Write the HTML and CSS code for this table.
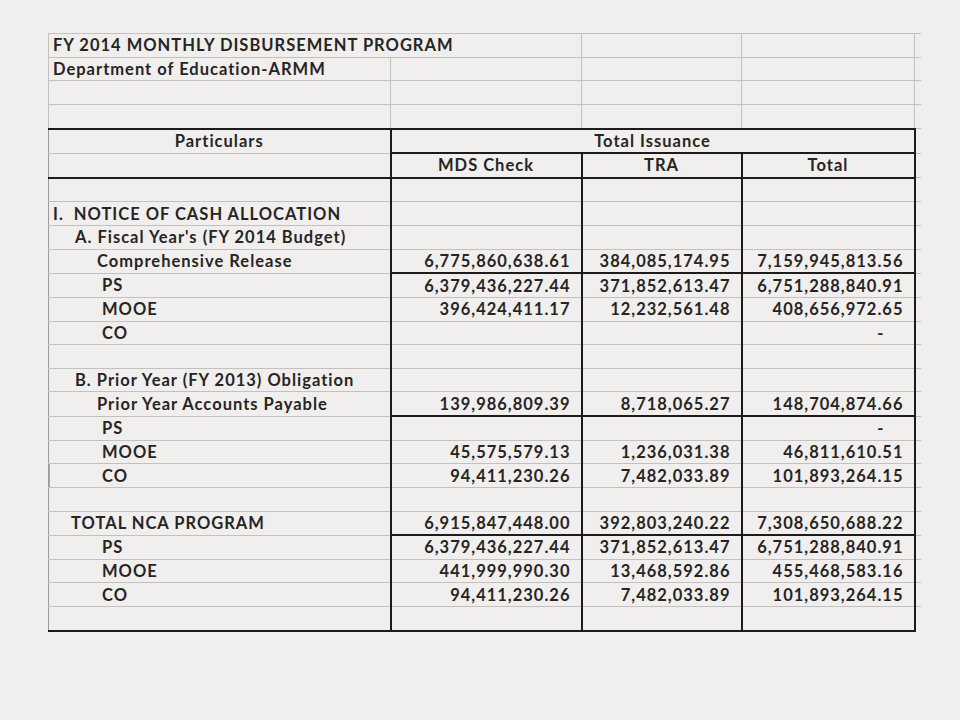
FILE: index.html
```html
<!DOCTYPE html>
<html>
<head>
<meta charset="utf-8">
<title>FY 2014 Monthly Disbursement Program</title>
<link rel="stylesheet" href="styles.css">
</head>
<body>
<div class="sheet">
<table class="grid">
  <colgroup>
    <col class="c-part"><col class="c-mds"><col class="c-tra"><col class="c-tot"><col class="c-pad">
  </colgroup>
  <tbody>
    <tr><td colspan="2" class="title">FY 2014 MONTHLY DISBURSEMENT PROGRAM</td><td></td><td></td><td class="pad"></td></tr>
    <tr><td class="title">Department of Education-ARMM</td><td></td><td></td><td></td><td class="pad"></td></tr>
    <tr><td></td><td></td><td></td><td></td><td class="pad"></td></tr>
    <tr><td></td><td></td><td></td><td></td><td class="pad"></td></tr>
    <tr class="head-top"><td class="center lb">Particulars</td><td colspan="3" class="center issuance">Total Issuance</td><td class="pad"></td></tr>
    <tr class="head-sub"><td class="lb"></td><td class="center vb">MDS Check</td><td class="center vb">TRA</td><td class="center vb rb">Total</td><td class="pad"></td></tr>
    <tr class="body-top"><td class="lb"></td><td class="vb"></td><td class="vb"></td><td class="vb rb"></td><td class="pad"></td></tr>
    <tr><td class="lb sec">I.&nbsp;&nbsp;NOTICE OF CASH ALLOCATION</td><td class="vb"></td><td class="vb"></td><td class="vb rb"></td><td class="pad"></td></tr>
    <tr><td class="lb l1">A. Fiscal Year's (FY 2014 Budget)</td><td class="vb"></td><td class="vb"></td><td class="vb rb"></td><td class="pad"></td></tr>
    <tr class="sub"><td class="lb l2">Comprehensive Release</td><td class="vb num">6,775,860,638.61</td><td class="vb num">384,085,174.95</td><td class="vb rb num">7,159,945,813.56</td><td class="pad"></td></tr>
    <tr><td class="lb l3">PS</td><td class="vb num">6,379,436,227.44</td><td class="vb num">371,852,613.47</td><td class="vb rb num">6,751,288,840.91</td><td class="pad"></td></tr>
    <tr><td class="lb l3">MOOE</td><td class="vb num">396,424,411.17</td><td class="vb num">12,232,561.48</td><td class="vb rb num">408,656,972.65</td><td class="pad"></td></tr>
    <tr><td class="lb l3">CO</td><td class="vb num"></td><td class="vb num"></td><td class="vb rb num dash">-</td><td class="pad"></td></tr>
    <tr><td class="lb"></td><td class="vb"></td><td class="vb"></td><td class="vb rb"></td><td class="pad"></td></tr>
    <tr><td class="lb l1">B. Prior Year (FY 2013) Obligation</td><td class="vb"></td><td class="vb"></td><td class="vb rb"></td><td class="pad"></td></tr>
    <tr class="sub"><td class="lb l2">Prior Year Accounts Payable</td><td class="vb num">139,986,809.39</td><td class="vb num">8,718,065.27</td><td class="vb rb num">148,704,874.66</td><td class="pad"></td></tr>
    <tr><td class="lb l3">PS</td><td class="vb num"></td><td class="vb num"></td><td class="vb rb num dash">-</td><td class="pad"></td></tr>
    <tr><td class="lb l3">MOOE</td><td class="vb num">45,575,579.13</td><td class="vb num">1,236,031.38</td><td class="vb rb num">46,811,610.51</td><td class="pad"></td></tr>
    <tr><td class="lb l3 mark">CO</td><td class="vb num">94,411,230.26</td><td class="vb num">7,482,033.89</td><td class="vb rb num">101,893,264.15</td><td class="pad"></td></tr>
    <tr><td class="lb"></td><td class="vb"></td><td class="vb"></td><td class="vb rb"></td><td class="pad"></td></tr>
    <tr class="sub"><td class="lb tot">TOTAL NCA PROGRAM</td><td class="vb num">6,915,847,448.00</td><td class="vb num">392,803,240.22</td><td class="vb rb num">7,308,650,688.22</td><td class="pad"></td></tr>
    <tr><td class="lb l3">PS</td><td class="vb num">6,379,436,227.44</td><td class="vb num">371,852,613.47</td><td class="vb rb num">6,751,288,840.91</td><td class="pad"></td></tr>
    <tr><td class="lb l3">MOOE</td><td class="vb num">441,999,990.30</td><td class="vb num">13,468,592.86</td><td class="vb rb num">455,468,583.16</td><td class="pad"></td></tr>
    <tr><td class="lb l3">CO</td><td class="vb num">94,411,230.26</td><td class="vb num">7,482,033.89</td><td class="vb rb num">101,893,264.15</td><td class="pad"></td></tr>
    <tr class="last"><td class="lb"></td><td class="vb"></td><td class="vb"></td><td class="vb rb"></td><td class="pad nob"></td></tr>
  </tbody>
</table>
</div>
</body>
</html>
```

FILE: styles.css
```css
html, body {
  margin: 0;
  padding: 0;
  background: #f0efed;
}
body {
  width: 960px;
  height: 720px;
  overflow: hidden;
}
.sheet {
  padding: 33px 0 0 48px;
}
.grid {
  border-collapse: collapse;
  table-layout: fixed;
  width: 872px;
  font-family: Lato, "Open Sans", sans-serif;
  font-weight: 700;
  font-size: 16.5px;
  letter-spacing: 1px;
  color: #272523;
}
.c-part { width: 342px; }
.c-mds { width: 191px; }
.c-tra { width: 160px; }
.c-tot { width: 173px; }
.c-pad { width: 6px; }

.grid td {
  height: 22.64px;
  padding: 0 4px;
  border: 1px solid #c2c1bf;
  white-space: nowrap;
  overflow: visible;
  line-height: 20px;
  vertical-align: middle;
}
.grid td.pad {
  border-right: none;
  padding: 0;
}
.grid td.nob { border-bottom: none; }

.grid .lb { border-left: 1px solid #9c9b99; }
.grid .vb { border-left: 2px solid #1c1c1c; }
.grid .rb { border-right: 2px solid #1c1c1c; }

.head-top td { border-top: 2px solid #1c1c1c; }
.head-top td.pad { border-top: 1px solid #c2c1bf; }
.grid td.issuance {
  border-left: 2px solid #1c1c1c;
  border-right: 2px solid #1c1c1c;
  border-bottom: 2px solid #1c1c1c;
}
.body-top td { border-top: 2px solid #1c1c1c; }
.body-top td.pad { border-top: 1px solid #c2c1bf; }

.sub td.vb { border-bottom: 2px solid #1c1c1c; }

.last td { border-bottom: 2px solid #1c1c1c; }
.last td.pad { border-bottom: none; }

.center { text-align: center; }
.num { text-align: right; }
.grid td.num { padding-right: 10px; }
.grid td.dash { padding-right: 29px; }

.grid td.title { padding-left: 4px; }
.grid td.sec { padding-left: 4px; }
.grid td.l1 { padding-left: 26px; }
.grid td.l2 { padding-left: 48px; }
.grid td.l3 { padding-left: 53px; }
.grid td.tot { padding-left: 22px; }

.grid td.mark { box-shadow: inset 1px 0 0 #e8a24a; }
```
